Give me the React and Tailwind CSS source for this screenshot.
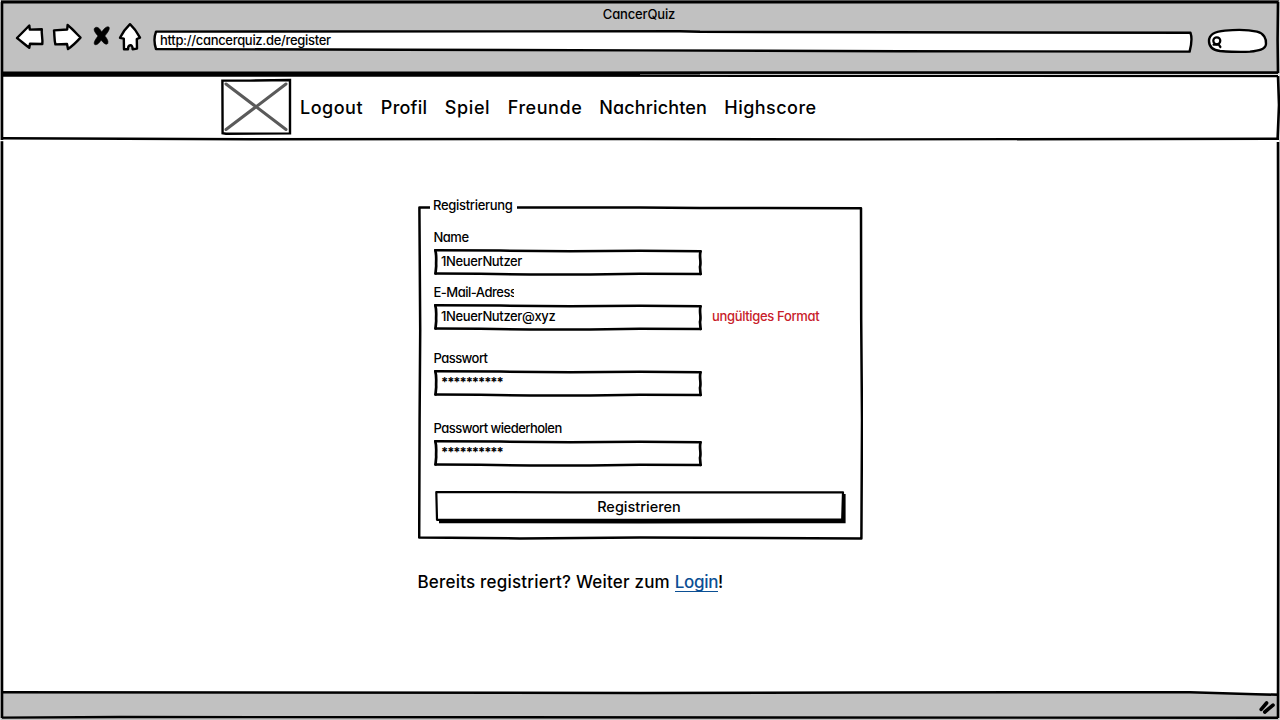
import React from "react";

function BackIcon() {
  return (
    <svg width="30" height="32" viewBox="15 21 30 32" fill="#fff" stroke="#000" strokeWidth="2.4" strokeLinejoin="round">
      <path d="M17 38 C21 34 25 30 29.3 25.5 L29.8 29.6 L41.8 29.3 C41.2 34 43 39 42.3 44 L30 43.8 L29.3 47.8 C25.5 45 21.5 41.5 17 38 Z" />
    </svg>
  );
}

function ForwardIcon() {
  return (
    <svg width="32" height="32" viewBox="52 21 32 32" fill="#fff" stroke="#000" strokeWidth="2.4" strokeLinejoin="round">
      <path d="M54 30.4 L67.2 29.5 L67.6 25 C72 28.5 76 33 80.5 37.6 C76.5 42 72.5 46 68 49 L67 44 L55.4 44.4 C54.2 40 54.6 35 54 30.4 Z" />
    </svg>
  );
}

function StopIcon() {
  return (
    <svg width="20" height="32" viewBox="92 21 20 32">
      <path d="M94.5 28.2 C96.5 26 99.6 27.8 101.6 32 C104 28.6 106.6 26 108.8 27 C110.6 28.4 107.4 33 104.8 36 C107 38.4 108.6 41 107.8 43.4 C106.6 45.4 103.4 43.4 101.2 40 C99 43.4 96.4 45.6 94.6 44.4 C93.2 42.4 96 38.6 98 36 C95.8 33.4 93.2 30.4 94.5 28.2 Z" fill="#000" stroke="#000" strokeWidth="0.6" />
    </svg>
  );
}

function HomeIcon() {
  return (
    <svg width="26" height="32" viewBox="117 21 26 32" fill="#fff" stroke="#000" strokeWidth="2.4" strokeLinejoin="round">
      <path d="M130 24.2 C133.6 27.6 137 32 140 37.6 L136.8 39 L137 48.6 L132.6 49.2 C132.6 46.2 131.6 45.2 130.2 45.3 C128.6 45.4 128 46.4 128 49.2 L124 49.2 L123.8 38.6 L120 37.8 C122.6 32.6 126 28 130 24.2 Z" />
    </svg>
  );
}

function AddressBar() {
  return (
    <div className="relative ml-[10px] h-6 w-[1040px] pl-[7px] leading-[22px] tracking-[-0.31px]">
      <svg className="absolute inset-0" width="1040" height="24" viewBox="153 29 1040 24" fill="#fff" stroke="#000" strokeWidth="2.4" strokeLinejoin="round">
        <path d="M156 31.6 L680 31.2 L700 31.8 L1190.5 32.8 C1192 37 1191.6 44 1189.6 51.6 L900 51.2 L640 50.4 L400 49.8 L156 49 C154 43 154 37 156 31.6 Z" />
      </svg>
      <span className="relative">http://cancerquiz.de/register</span>
    </div>
  );
}

function SearchBox() {
  return (
    <svg className="ml-[13px]" width="64" height="28" viewBox="1206 27 64 28" fill="#fff" stroke="#000" strokeLinejoin="round" strokeLinecap="round">
      <path d="M1209 41 C1209 34 1217 31.2 1225 30.6 C1236 29.6 1250 30 1257 31.6 C1264 33.2 1266.6 39 1266 44 C1265.6 49.6 1258 50.6 1250 51.6 C1240 52.4 1228 51.6 1220 51 C1212 50 1209 46 1209 41 Z" strokeWidth="2.4" />
      <circle cx="1216.8" cy="40.8" r="3.5" strokeWidth="2.2" />
      <path d="M1213.6 44.6 L1218.6 44.4 L1220.4 47" fill="none" strokeWidth="2.2" />
    </svg>
  );
}

function ImagePlaceholder() {
  return (
    <svg width="71" height="58" viewBox="221 78 71 58" fill="none" strokeLinecap="round">
      <path d="M222.4 80.6 L250 80.6 L290 80 L290 133.4 L226 133.8 L222.6 133.2 Z" stroke="#000" strokeWidth="2.4" />
      <path d="M226 84 L286 129.5 M286 84 L226 129.5" stroke="#5a5a5a" strokeWidth="3" />
    </svg>
  );
}

function Field({ label, labelClass, value, valueClass, note }) {
  return (
    <div>
      <div className={`h-4 leading-4 whitespace-nowrap ${labelClass}`}>{label}</div>
      <div className="mt-[3px] flex h-7 leading-[27px]">
        <div className="relative w-[268px] shrink-0 pl-[7px]">
          <svg className="absolute inset-0" width="268" height="28" viewBox="434 248 268 28" fill="none" stroke="#000" strokeLinecap="round">
            <path d="M435.3 250.3 L500 250.6 L570 251.2 L640 250.8 L700.5 251.3" strokeWidth="2.5" />
            <path d="M700.5 251.3 C699 257 701.5 262 700 267 L700.6 274" strokeWidth="2.7" />
            <path d="M435.5 273.5 L480 273.7 L530 274.6 L590 274.4 L640 273.8 L700.6 274" strokeWidth="2.5" />
            <path d="M435.3 250.3 C437 256 435.8 262 436.2 266 L435.5 273.5" strokeWidth="2.7" />
          </svg>
          <span className={valueClass}>{value}</span>
        </div>
        {note && <span className="ml-[10px] tracking-[-0.34px] whitespace-nowrap text-[#c8202a]">{note}</span>}
      </div>
    </div>
  );
}

function Header() {
  return (
    <header className="flex h-[75px] shrink-0 flex-col bg-[#c1c1c1] pt-[6px]">
      <div className="h-[15px] pr-[2px] text-center tracking-[-0.15px]">CancerQuiz</div>
      <div className="flex h-8 items-center pl-[15px]">
        <BackIcon />
        <div className="ml-[7px]"><ForwardIcon /></div>
        <div className="ml-2"><StopIcon /></div>
        <div className="ml-[5px]"><HomeIcon /></div>
        <div className="flex pt-[10px]">
          <AddressBar />
          <div className="-mt-[2px]"><SearchBox /></div>
        </div>
      </div>
    </header>
  );
}

function Nav() {
  return (
    <nav className="flex h-[65px] shrink-0 items-start bg-white pt-[3px] pl-[221px] text-[18px]">
      <ImagePlaceholder />
      <div className="flex gap-[17px] pt-[18px] pl-2 leading-6">
        <span className="tracking-[0.5px]">Logout</span>
        <span className="ml-[0.8px] tracking-[0.25px]">Profil</span>
        <span className="ml-[0.5px] tracking-[0.6px]">Spiel</span>
        <span className="ml-[0.5px] tracking-[0.55px]">Freunde</span>
        <span className="tracking-[0.12px]">Nachrichten</span>
        <span className="ml-[0.5px] tracking-[0.45px]">Highscore</span>
      </div>
    </nav>
  );
}

function RegisterForm() {
  return (
    <form className="relative flow-root h-[334px] w-[445px] pl-4">
      <svg className="absolute inset-0" width="445" height="334" viewBox="418 206 445 334" fill="none" stroke="#000" strokeLinejoin="round">
        <path d="M419.4 207.4 L640 207.4 L700 208 L861 208.2 L861.2 320 L862 420 L861.4 538.4 L640 537.6 L520 538.4 L419.2 537.6 L419.6 420 L420.2 330 Z" strokeWidth="2.5" />
      </svg>
      <div className="relative -mt-[9px] -ml-1 w-[87px] bg-white pl-[3px] tracking-[-0.3px]">Registrierung</div>
      <div className="relative pt-4">
        <Field label="Name" labelClass="tracking-[-0.5px] -ml-[0.5px]" value="1NeuerNutzer" valueClass="tracking-[-0.36px]" />
        <div className="h-2" />
        <Field
          label="E-Mail-Adress"
          labelClass="-ml-[0.5px] w-[80.5px] overflow-hidden tracking-[-0.5px]"
          value="1NeuerNutzer@xyz"
          valueClass="tracking-[-0.36px]"
          note="ungültiges Format"
        />
        <div className="h-[19px]" />
        <Field label="Passwort" labelClass="-ml-[0.5px] tracking-[-0.55px]" value="**********" valueClass="font-bold tracking-[-1.1px]" />
        <div className="h-[23px]" />
        <Field label="Passwort wiederholen" labelClass="-ml-[0.5px] tracking-[-0.53px]" value="**********" valueClass="font-bold tracking-[-1.1px]" />
        <button type="button" className="relative mt-[23px] block h-[34px] w-[412px] pr-[2px] pb-[2px] text-[14.5px] leading-[31px]">
          <svg className="absolute inset-0" width="412" height="34" viewBox="434 490 412 34">
            <path d="M439 494 L845.6 494 L845.6 523.2 L640 523.6 L439 523.2 Z" fill="#000" />
            <path d="M436.3 492 L570 492.4 L843 492.4 L842.2 519.6 L640 519.8 L437 519.8 Z" fill="#fff" stroke="#000" strokeWidth="2.2" strokeLinejoin="round" />
          </svg>
          <span className="relative">Registrieren</span>
        </button>
      </div>
    </form>
  );
}

function WindowFrame() {
  return (
    <svg className="pointer-events-none absolute inset-0" width="1280" height="720" viewBox="0 0 1280 720" fill="none" stroke="#000">
      <path d="M0 0.5 H1280" stroke="#555" strokeWidth="1" />
      <path d="M1279.5 0 V720 M0.5 0 V720" stroke="#d8d8d8" strokeWidth="1" />
      <path d="M1 2.2 L1278.6 2.2" strokeWidth="2.4" />
      <path d="M2 2 L2 718" strokeWidth="2.6" />
      <path d="M1278 2 L1277.6 40 L1278 73" strokeWidth="2.6" />
      <path d="M2 72.8 L500 72.8 L1278 72.6" strokeWidth="2.8" />
      <path d="M2 75.6 L350 75.6 L1278 76.1" strokeWidth="2.2" />
      <path d="M2 74.2 L640 74.2" strokeWidth="1.4" />
      <path d="M700 74.4 L1280 74.4" stroke="#e8e8e8" strokeWidth="0.8" />
      <path d="M1278 76 L1279 105 L1277.6 139 M1278 142 L1278.4 400 L1278 718" strokeWidth="2.6" />
      <path d="M1 138.2 L250 139.2 L640 139 L860 139.4 L1279 138.8" strokeWidth="2.4" />
      <path d="M0 140.6 H4" stroke="#fff" strokeWidth="1.2" />
      <path d="M2 692.2 L640 693 L860 692.4 L1190 692.3 L1278 694.8" strokeWidth="2.5" />
      <path d="M2 717.6 L120 717 L1278 717.8" strokeWidth="2.4" />
    </svg>
  );
}

export default function App() {
  return (
    <div className="relative flex h-[720px] w-[1280px] flex-col overflow-hidden bg-white font-['Inter','Liberation_Sans',sans-serif] text-[13px] leading-4 font-medium text-black [font-feature-settings:'cv11']">
      <Header />
      <Nav />
      <main className="flex-1 pt-[66px] pl-[418px]">
        <RegisterForm />
        <p className="mt-[30px] -ml-[0.5px] text-[17px] leading-6 tracking-[0.2px]">
          Bereits registriert? Weiter zum{" "}
          <a className="inline-block border-b border-[#0b4f94] leading-[18px] tracking-[-0.3px] text-[#0b4f94]">Login</a>!
        </p>
      </main>
      <footer className="flex h-[27px] shrink-0 justify-end bg-[#c1c1c1] pt-[5px] pr-1">
        <svg width="18" height="18" viewBox="1257 698 18 18" stroke="#000" strokeWidth="3.6" strokeLinecap="round">
          <path d="M1260.2 709.4 L1265.6 703 M1263.8 712 L1272 705.2" />
        </svg>
      </footer>
      <WindowFrame />
    </div>
  );
}
